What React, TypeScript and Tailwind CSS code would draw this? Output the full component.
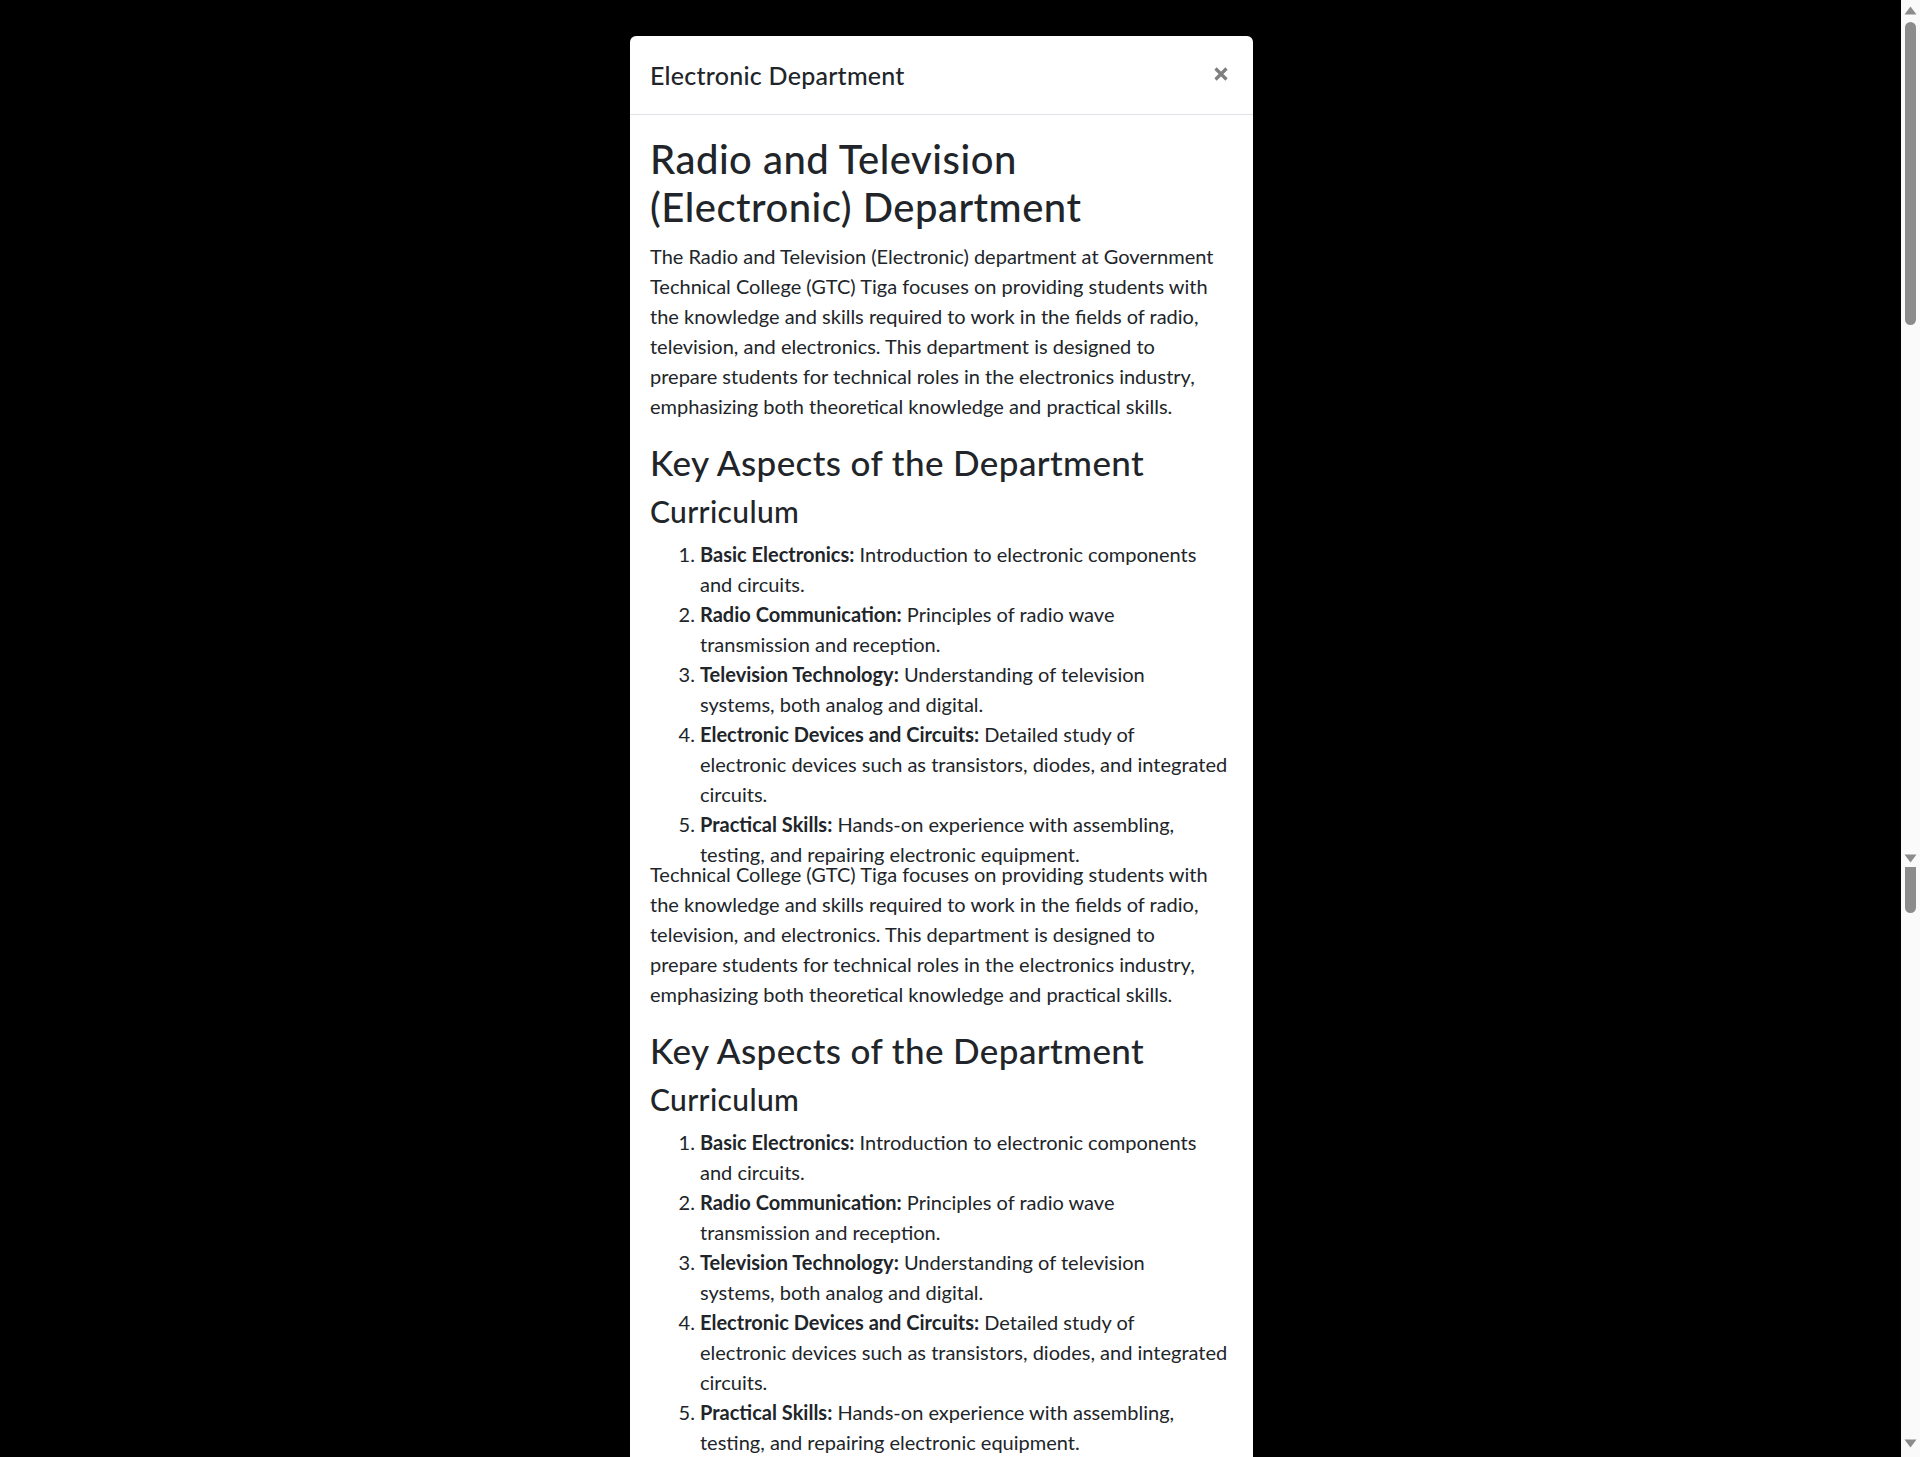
import React from 'react';

const nw = (t: string) => <span className="whitespace-nowrap">{t}</span>;

const curriculum: { title: string; desc: React.ReactNode }[] = [
  { title: 'Basic Electronics:', desc: <>Introduction to electronic components {nw('and circuits.')}</> },
  { title: 'Radio Communication:', desc: <>Principles of radio wave {nw('transmission and')} reception.</> },
  { title: 'Television Technology:', desc: <>Understanding of television {nw('systems, both')} analog and digital.</> },
  {
    title: 'Electronic Devices and Circuits:',
    desc: <>Detailed study of {nw('electronic devices')} such as transistors, diodes, and integrated circuits.</>,
  },
  { title: 'Practical Skills:', desc: <>Hands-on experience with assembling, {nw('testing, and')} repairing electronic equipment.</> },
];

function IntroRest() {
  return (
    <>
      Technical College (GTC) Tiga focuses on providing students with {nw('the knowledge')} and skills required to work in
      the fields of radio, television, and electronics. This department is designed to {nw('prepare students')} for
      technical roles in the electronics industry, emphasizing both theoretical knowledge and practical skills.
    </>
  );
}

function KeyAspects({ last }: { last?: boolean }) {
  return (
    <>
      <h3 className="mb-[10px] text-[35px] font-medium leading-[42px] tracking-[0.4px]">Key Aspects of the Department</h3>
      <h4 className="mb-[10px] text-[30px] font-medium leading-[36px] tracking-[0.35px]">Curriculum</h4>
      <ol className={`list-decimal pl-[50px] ${last ? 'mb-[20px]' : 'mb-[-10px]'}`}>
        {curriculum.map((c) => (
          <li key={c.title}>
            <strong className="font-bold">{c.title}</strong> {c.desc}
          </li>
        ))}
      </ol>
    </>
  );
}

function Arrow({ up }: { up?: boolean }) {
  return (
    <svg width="13" height="9" viewBox="0 0 13 9" className="block">
      <path d={up ? 'M6.5 0.5 L12.5 8.5 L0.5 8.5 Z' : 'M0.5 0.5 L12.5 0.5 L6.5 8.5 Z'} fill="#8c8c8c" />
    </svg>
  );
}

function Scrollbar() {
  return (
    <div className="flex w-[19px] shrink-0 flex-col items-center bg-[#fafafa]">
      <div className="mt-[6px]">
        <Arrow up />
      </div>
      <div className="mt-[7px] h-[303px] w-[11px] rounded-full bg-[#8c8c8c]" />
      <div className="mt-[529px]">
        <Arrow />
      </div>
      <div className="mt-[4px] h-[46px] w-[11px] rounded-b-full bg-[#8c8c8c]" />
      <div className="mt-[526px]">
        <Arrow />
      </div>
    </div>
  );
}

export default function App() {
  return (
    <div className="flex h-[1457px] w-[1920px] overflow-hidden bg-black">
      <div className="flex-1">
        <div
          className="ml-[630px] mt-[36px] h-[1421px] w-[623px] overflow-hidden rounded-t-[6px] bg-white text-[20px] leading-[30px] text-[#212529]"
          style={{ fontFamily: 'Lato, "Open Sans", sans-serif' }}
        >
          <div className="flex items-center justify-between border-b border-[#dee2e6] px-5 pb-[19px] pt-[21px]">
            <h5 className="text-[25px] font-medium leading-[37.5px] tracking-[0.25px]">Electronic Department</h5>
            <button className="mr-[4px] mt-[-3px] flex h-[16px] w-[16px] items-center justify-center" aria-label="Close">
              <svg width="14" height="14" viewBox="0 0 14 14">
                <path d="M1.5 1.5 L12.5 12.5 M12.5 1.5 L1.5 12.5" stroke="#7f7f7f" strokeWidth="3.2" />
              </svg>
            </button>
          </div>
          <div className="p-5">
            <h2 className="mb-[10px] text-[40px] font-medium leading-[48px] tracking-[0.5px]">
              Radio and Television {nw('(Electronic) Department')}
            </h2>
            <p className="mb-[20px]">
              The Radio and Television (Electronic) department at Government <IntroRest />
            </p>
            <KeyAspects />
            <p className="mb-[20px]">
              <IntroRest />
            </p>
            <KeyAspects last />
          </div>
        </div>
      </div>
      <Scrollbar />
    </div>
  );
}
